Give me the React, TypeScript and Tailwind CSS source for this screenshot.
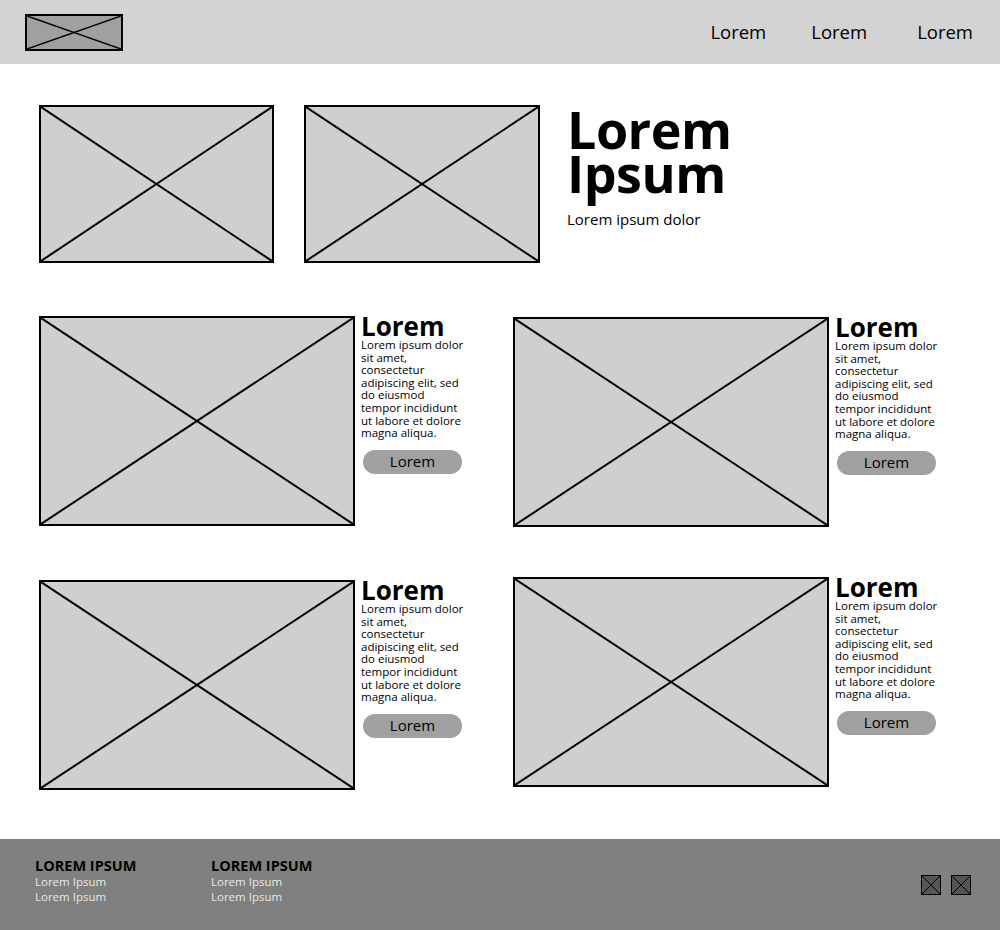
import React from 'react';

function Placeholder({ className = '', stroke = 2 }: { className?: string; stroke?: number }) {
  return (
    <div className={`relative border-2 border-black ${className}`}>
      <svg className="absolute inset-0 h-full w-full" viewBox="0 0 100 100" preserveAspectRatio="none">
        <line x1="0" y1="0" x2="100" y2="100" stroke="black" strokeWidth={stroke} vectorEffect="non-scaling-stroke" />
        <line x1="100" y1="0" x2="0" y2="100" stroke="black" strokeWidth={stroke} vectorEffect="non-scaling-stroke" />
      </svg>
    </div>
  );
}

const body = [
  'Lorem ipsum dolor',
  'sit amet,',
  'consectetur',
  'adipiscing elit, sed',
  'do eiusmod',
  'tempor incididunt',
  'ut labore et dolore',
  'magna aliqua.',
];

function Card({ className = '' }: { className?: string }) {
  return (
    <div className={`flex gap-[6px] ${className}`}>
      <Placeholder className="h-[210px] w-[316px] shrink-0 bg-[#cfcfcf]" />
      <div className="flex flex-col">
        <h3 className="-mt-[2px] text-[26px] font-bold leading-[24px] text-black">Lorem</h3>
        <p className="mt-[1px] text-[11.5px] leading-[12.6px] text-black">
          {body.map((l, i) => (
            <span key={i} className="block whitespace-nowrap">{l}</span>
          ))}
        </p>
        <button className="ml-[2px] mt-[10px] h-[24px] w-[99px] rounded-[12px] bg-[#a0a0a0] text-[15px] leading-none text-black">
          Lorem
        </button>
      </div>
    </div>
  );
}

export default function App() {
  return (
    <div className="flex min-h-[930px] w-[1000px] flex-col bg-white font-['Open_Sans',sans-serif]">
      {/* Header */}
      <header className="flex h-[64px] items-center justify-between bg-[#d3d3d3] pl-[25px] pr-[27px]">
        <Placeholder className="h-[37px] w-[98px] bg-[#a0a0a0]" stroke={1.5} />
        <nav className="flex items-center text-[18.5px] text-black">
          <span>Lorem</span>
          <span className="ml-[45px]">Lorem</span>
          <span className="ml-[50px]">Lorem</span>
        </nav>
      </header>

      {/* Hero */}
      <section className="flex items-start pl-[39px] pt-[41px]">
        <Placeholder className="h-[158px] w-[235px] bg-[#cfcfcf]" />
        <Placeholder className="ml-[30px] h-[158px] w-[236px] bg-[#cfcfcf]" />
        <div className="ml-[27px] pt-[2px]">
          <h1 className="text-[52px] font-bold leading-[44px] tracking-[-0.5px] text-black">
            Lorem
            <br />
            Ipsum
          </h1>
          <p className="mt-[13px] text-[15px] text-black">Lorem ipsum dolor</p>
        </div>
      </section>

      {/* Cards */}
      <section className="grid grid-cols-[474px_auto] gap-y-[52px] pl-[39px] pt-[53px]">
        <Card />
        <Card className="mt-[1px]" />
        <Card className="mt-[1px]" />
        <Card className="-mt-[2px]" />
      </section>

      {/* Footer */}
      <footer className="mt-auto flex h-[91px] items-start bg-[#808080] pl-[35px] pr-[29px] pt-[19px]">
        <div className="w-[176px]">
          <h4 className="text-[14.5px] font-bold leading-[16px] text-black">LOREM IPSUM</h4>
          <p className="text-[11.5px] leading-[15px] text-[#e8e8e8]">Lorem Ipsum</p>
          <p className="text-[11.5px] leading-[15px] text-[#e8e8e8]">Lorem Ipsum</p>
        </div>
        <div>
          <h4 className="text-[14.5px] font-bold leading-[16px] text-black">LOREM IPSUM</h4>
          <p className="text-[11.5px] leading-[15px] text-[#e8e8e8]">Lorem Ipsum</p>
          <p className="text-[11.5px] leading-[15px] text-[#e8e8e8]">Lorem Ipsum</p>
        </div>
        <div className="ml-auto mt-[17px] flex gap-[10px]">
          <Placeholder className="h-[20px] w-[20px] !border bg-[#555555]" stroke={1} />
          <Placeholder className="h-[20px] w-[20px] !border bg-[#555555]" stroke={1} />
        </div>
      </footer>
    </div>
  );
}
